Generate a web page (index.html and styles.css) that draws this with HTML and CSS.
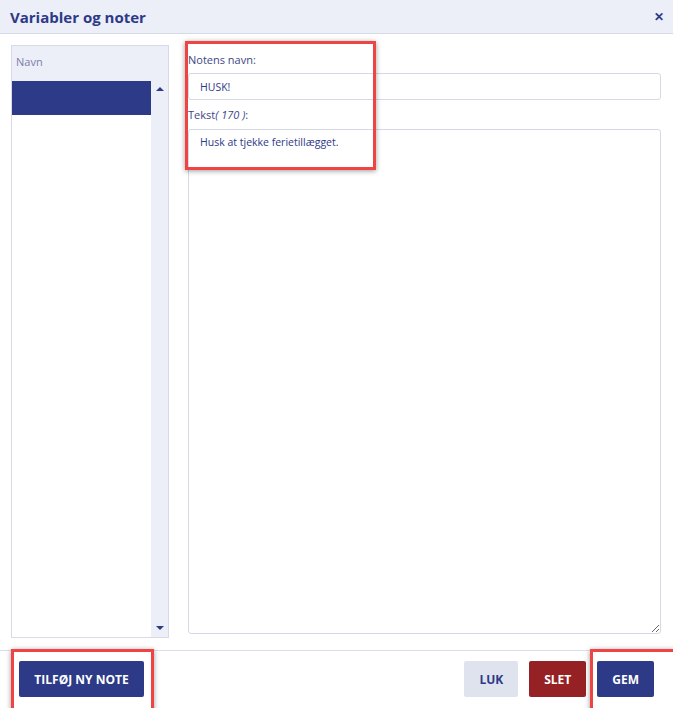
FILE: index.html
```html
<!DOCTYPE html>
<html lang="da">
<head>
    <meta charset="UTF-8">
    <title>Variabler og noter</title>
    <link rel="stylesheet" href="styles.css">
</head>
<body>

<div class="dialog">
    <div class="dialog-header">
        <h2>Variabler og noter</h2>
        <span class="close">&#x2715;</span>
    </div>

    <div class="dialog-body">
        <div class="list">
            <div class="list-head">Navn</div>
            <div class="list-rows">
                <div class="rows">
                    <div class="row selected"></div>
                </div>
                <div class="scrollbar">
                    <span class="arrow up"></span>
                    <span class="arrow down"></span>
                </div>
            </div>
        </div>

        <div class="form">
            <label>Notens navn:</label>
            <input type="text" class="box" value="HUSK!">
            <label>Tekst<i>( 170 )</i>:</label>
            <textarea class="box area">Husk at tjekke ferietillægget.</textarea>
        </div>
    </div>

    <div class="dialog-footer">
        <button class="btn btn-primary btn-add">TILFØJ NY NOTE</button>
        <div class="right-btns">
            <button class="btn btn-light">LUK</button>
            <button class="btn btn-danger">SLET</button>
            <button class="btn btn-primary">GEM</button>
        </div>
    </div>

    <!-- markeringer -->
    <div class="mark mark-form"></div>
    <div class="mark mark-add"></div>
    <div class="mark mark-save"></div>
</div>

</body>
</html>
```

FILE: styles.css
```css
*{
    margin: 0;
    padding: 0;
    box-sizing: border-box;
}

body{
    font-family: "Open Sans", "Liberation Sans", sans-serif;
    background: white;
    color: #2c3a87;
}

.dialog{
    position: relative;
    width: 673px;
    height: 708px;
    overflow: hidden;
}

.dialog-header{
    display: flex;
    justify-content: space-between;
    align-items: center;
    height: 34px;
    padding: 0 9px 0 10px;
    background-color: #eceef8;
    border-bottom: 1px solid #d6d9e6;
}

.dialog-header h2{
    font-size: 15px;
    font-weight: 700;
    color: #2c3a87;
}

.close{
    font-size: 12px;
    font-weight: 700;
    color: #2c3a87;
}

.dialog-body{
    display: flex;
    gap: 19px;
    height: 616px;
    padding: 11px 12px 12px 11px;
}

.list{
    display: flex;
    flex-direction: column;
    width: 158px;
    border: 1px solid #d8dbe6;
    background-color: #eceef8;
}

.list-head{
    height: 35px;
    padding: 8px 0 0 4px;
    font-size: 11px;
    color: #7a80aa;
}

.list-rows{
    display: flex;
    flex: 1;
}

.rows{
    flex: 1;
    background: white;
}

.row{
    height: 34px;
}

.row.selected{
    background-color: #2c3a87;
}

.scrollbar{
    position: relative;
    width: 17px;
    background-color: #eceef8;
}

.arrow{
    position: absolute;
    left: 5px;
    width: 0;
    height: 0;
    border-left: 4px solid transparent;
    border-right: 4px solid transparent;
}

.arrow.up{
    top: 6px;
    border-bottom: 4px solid #2c3a87;
}

.arrow.down{
    bottom: 7px;
    border-top: 4px solid #2c3a87;
}

.form{
    display: flex;
    flex-direction: column;
    flex: 1;
}

.form label{
    font-size: 11px;
    color: #3d4785;
    margin-top: 7px;
    height: 21px;
}

.box{
    padding: 6px 11px;
    border: 1px solid #d6d9e3;
    border-radius: 3px;
    font-family: inherit;
    font-size: 10.5px;
    color: #2c3a87;
    outline: none;
}

input.box{
    height: 27px;
}

.area{
    flex: 1;
    margin-top: 1px;
    padding-top: 5px;
    margin-bottom: 4px;
    resize: both;
}

.dialog-footer{
    display: flex;
    justify-content: space-between;
    align-items: flex-start;
    height: 58px;
    padding: 10px 19px 0 19px;
    border-top: 1px solid #dcdcec;
}

.right-btns{
    display: flex;
    gap: 11px;
}

.btn{
    height: 36px;
    padding: 0 15px;
    border: none;
    border-radius: 2px;
    font-family: inherit;
    font-size: 12px;
    font-weight: 700;
}

.btn-add{
    padding: 0 14px;
    width: 125px;
}

.btn-primary{
    background-color: #2c3a87;
    color: white;
}

.btn-light{
    background-color: #dfe3ee;
    color: #2c3a87;
}

.btn-danger{
    background-color: #962124;
    color: white;
}

.mark{
    position: absolute;
    border: 3px solid #ef4444;
    box-shadow: 0 1px 5px rgba(0, 0, 0, 0.4);
}

.mark-form{
    left: 185px;
    top: 41px;
    width: 191px;
    height: 129px;
}

.mark-add{
    left: 11px;
    top: 649px;
    width: 143px;
    height: 70px;
}

.mark-save{
    left: 590px;
    top: 649px;
    width: 92px;
    height: 70px;
}
```
